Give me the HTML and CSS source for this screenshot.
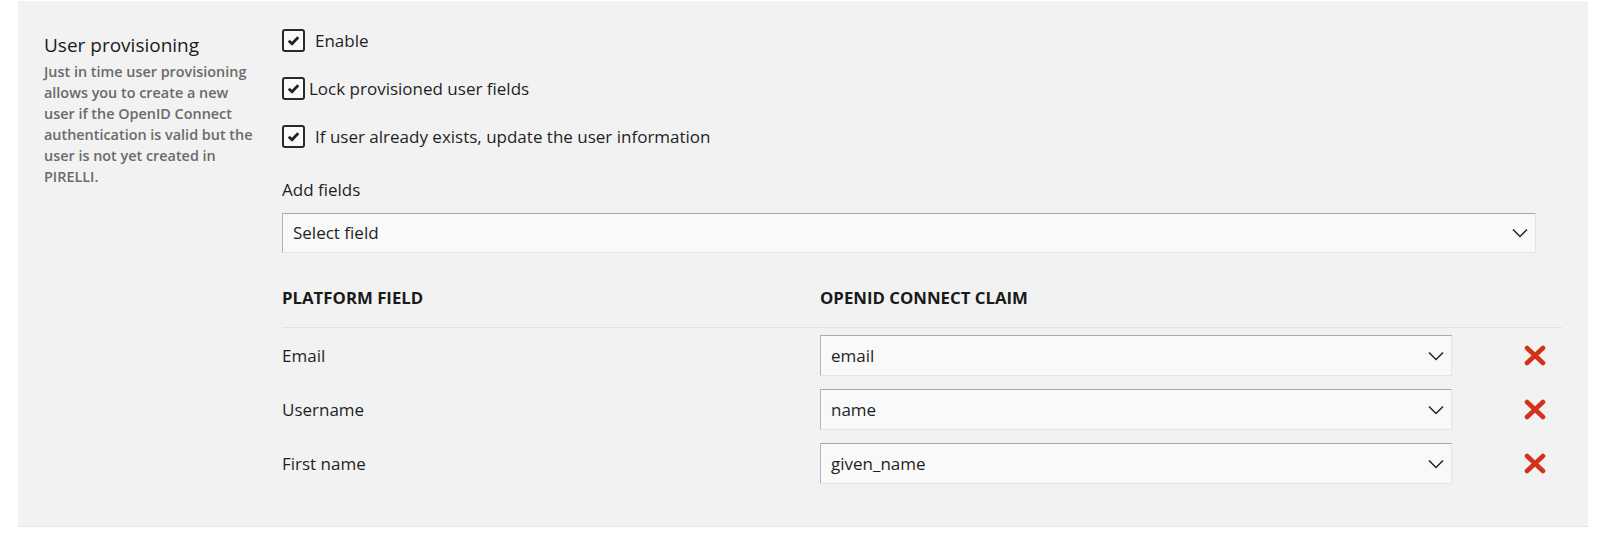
FILE: index.html
```html
<!DOCTYPE html>
<html lang="en">
<head>
<meta charset="utf-8">
<title>User provisioning</title>
<link rel="stylesheet" href="styles.css">
</head>
<body>
<section class="panel">
  <aside class="side">
    <h2 class="side-title">User provisioning</h2>
    <p class="side-desc">Just in time user provisioning allows you to create a new user if the OpenID Connect authentication is valid but the user is not yet created in PIRELLI.</p>
  </aside>
  <div class="main">
    <div class="checks">
      <label class="check">
        <span class="box"><svg viewBox="0 0 14 12" width="13" height="11"><path d="M1.8 6.2 L5.4 9.6 L12.2 2.4" fill="none" stroke="#222" stroke-width="3"/></svg></span>
        <span class="check-text">Enable</span>
      </label>
      <label class="check check-tight">
        <span class="box"><svg viewBox="0 0 14 12" width="13" height="11"><path d="M1.8 6.2 L5.4 9.6 L12.2 2.4" fill="none" stroke="#222" stroke-width="3"/></svg></span>
        <span class="check-text">Lock provisioned user fields</span>
      </label>
      <label class="check">
        <span class="box"><svg viewBox="0 0 14 12" width="13" height="11"><path d="M1.8 6.2 L5.4 9.6 L12.2 2.4" fill="none" stroke="#222" stroke-width="3"/></svg></span>
        <span class="check-text">If user already exists, update the user information</span>
      </label>
    </div>

    <div class="add-label">Add fields</div>
    <div class="select select-wide">
      <span>Select field</span>
      <svg class="chev" viewBox="0 0 16 10" width="16" height="10"><path d="M1 1.5 L8 8.5 L15 1.5" fill="none" stroke="#222" stroke-width="1.5"/></svg>
    </div>

    <div class="table">
      <div class="thead">
        <div class="th col-a">PLATFORM FIELD</div>
        <div class="th col-b">OPENID CONNECT CLAIM</div>
        <div class="th col-c"></div>
      </div>
      <div class="tr">
        <div class="td col-a">Email</div>
        <div class="td col-b">
          <div class="select"><span>email</span><svg class="chev" viewBox="0 0 16 10" width="16" height="10"><path d="M1 1.5 L8 8.5 L15 1.5" fill="none" stroke="#222" stroke-width="1.5"/></svg></div>
        </div>
        <div class="td col-c"><svg class="remove" viewBox="0 0 22 21" width="22" height="21"><path d="M3 3 L19 18 M19 3 L3 18" stroke="#d2311c" stroke-width="4.6" stroke-linecap="round"/></svg></div>
      </div>
      <div class="tr">
        <div class="td col-a">Username</div>
        <div class="td col-b">
          <div class="select"><span>name</span><svg class="chev" viewBox="0 0 16 10" width="16" height="10"><path d="M1 1.5 L8 8.5 L15 1.5" fill="none" stroke="#222" stroke-width="1.5"/></svg></div>
        </div>
        <div class="td col-c"><svg class="remove" viewBox="0 0 22 21" width="22" height="21"><path d="M3 3 L19 18 M19 3 L3 18" stroke="#d2311c" stroke-width="4.6" stroke-linecap="round"/></svg></div>
      </div>
      <div class="tr">
        <div class="td col-a">First name</div>
        <div class="td col-b">
          <div class="select"><span>given_name</span><svg class="chev" viewBox="0 0 16 10" width="16" height="10"><path d="M1 1.5 L8 8.5 L15 1.5" fill="none" stroke="#222" stroke-width="1.5"/></svg></div>
        </div>
        <div class="td col-c"><svg class="remove" viewBox="0 0 22 21" width="22" height="21"><path d="M3 3 L19 18 M19 3 L3 18" stroke="#d2311c" stroke-width="4.6" stroke-linecap="round"/></svg></div>
      </div>
    </div>
  </div>
</section>
</body>
</html>
```

FILE: styles.css
```css
* { box-sizing: border-box; }

body {
  margin: 0;
  background: #ffffff;
  font-family: "Open Sans", "Noto Sans", sans-serif;
  color: #1f1f1f;
}

.panel {
  margin: 1px 0 0 18px;
  width: 1570px;
  height: 526px;
  background: #f2f2f2;
  border-bottom: 1px solid #e6e6e6;
  display: flex;
  gap: 26px;
  padding: 0 26px;
}

.side {
  width: 212px;
  flex: none;
  padding-top: 31px;
}

.side-title {
  margin: 0;
  font-size: 19px;
  font-weight: 400;
  line-height: 26px;
  color: #1a1a1a;
}

.side-desc {
  margin: 3px 0 0;
  font-size: 14.4px;
  font-weight: 600;
  line-height: 21px;
  color: #6a6a6a;
}

.main {
  width: 1280px;
  flex: none;
  padding-top: 28px;
}

.checks {
  display: flex;
  flex-direction: column;
  gap: 25px;
}

.check {
  display: flex;
  align-items: center;
  gap: 10px;
  height: 23px;
  font-size: 17px;
  line-height: 24px;
}

.check-tight { gap: 4px; }

.box {
  width: 23px;
  height: 23px;
  flex: none;
  border: 2px solid #2a2a2a;
  border-radius: 3px;
  background: #fafafa;
  display: flex;
  align-items: center;
  justify-content: center;
}

.add-label {
  margin-top: 30px;
  font-size: 17px;
  line-height: 24px;
}

.select {
  height: 41px;
  background: #f9f9f9;
  border: 1px solid;
  border-color: #a9a9a9 #e4e4e4 #e4e4e4 #b5b5b5;
  display: flex;
  align-items: center;
  justify-content: space-between;
  padding: 0 7px 0 10px;
  font-size: 17px;
  line-height: 24px;
  color: #1f1f1f;
}

.select-wide {
  margin-top: 11px;
  width: 1254px;
  height: 40px;
}

.table {
  margin-top: 35px;
}

.thead {
  display: flex;
  height: 40px;
  border-bottom: 1px solid #e2e2e2;
}

.th {
  font-size: 16.8px;
  font-weight: 700;
  line-height: 20px;
  color: #1a1a1a;
}

.tr {
  display: flex;
  align-items: center;
  padding: 7px 0 6px;
}

.td {
  font-size: 17px;
  line-height: 24px;
}

.col-a { width: 538px; flex: none; }
.col-b { width: 632px; flex: none; }
.col-c {
  width: 110px;
  flex: none;
  display: flex;
  justify-content: flex-end;
  padding-right: 16px;
}

.remove { display: block; }
.chev { display: block; flex: none; }
```
